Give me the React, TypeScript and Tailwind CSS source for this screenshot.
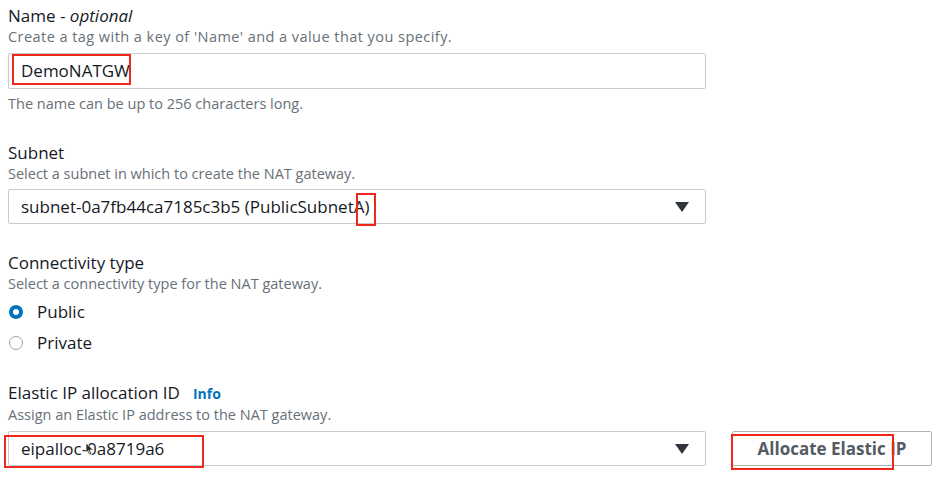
import React from "react";

const Caret = () => (
  <svg width="14" height="10" viewBox="0 0 14 10" className="shrink-0">
    <path d="M0 0 H14 L7 10 Z" fill="#2f343b" />
  </svg>
);

const Label = ({ children }: { children: React.ReactNode }) => (
  <div className="text-[17px] leading-[22px] text-[#16191f]">{children}</div>
);

const Desc = ({ children, className = "" }: { children: React.ReactNode; className?: string }) => (
  <div className={`text-[14.5px] leading-[20px] text-[#687078] ${className}`}>{children}</div>
);

const Radio = ({ checked, label }: { checked?: boolean; label: string }) => (
  <div className="flex h-[31px] items-center">
    {checked ? (
      <span className="ml-[1px] h-[14px] w-[14px] rounded-full border-[4px] border-[#0073bb] bg-white" />
    ) : (
      <span className="ml-[1px] h-[14px] w-[14px] rounded-full border border-[#9aa5a6] bg-white" />
    )}
    <span className="ml-[14px] text-[17px] text-[#16191f]">{label}</span>
  </div>
);

const RedBox = ({ className }: { className: string }) => (
  <div className={`pointer-events-none absolute border-2 border-[#f2271c] ${className}`} />
);

export default function App() {
  return (
    <div
      className="relative h-[478px] w-[936px] overflow-hidden bg-white pl-2 pt-[5px]"
      style={{ fontFamily: '"Open Sans", "Noto Sans", sans-serif' }}
    >
      {/* Name */}
      <Label>
        Name - <i>optional</i>
      </Label>
      <Desc className="tracking-[0.45px]">Create a tag with a key of 'Name' and a value that you specify.</Desc>
      <div className="mt-[6px] flex h-[36px] w-[698px] items-center rounded-[2px] border border-[#c6cccd] pl-[12px] text-[17px] text-[#16191f]">
        DemoNATGW
      </div>
      <Desc className="mt-[5px]">The name can be up to 256 characters long.</Desc>

      {/* Subnet */}
      <div className="mt-[28px]">
        <Label>Subnet</Label>
        <Desc>Select a subnet in which to create the NAT gateway.</Desc>
      </div>
      <div className="mt-[5px] flex h-[35px] w-[698px] items-center justify-between rounded-[2px] border border-[#c6cccd] pl-[12px] pr-[16px] text-[17px] text-[#16191f]">
        <span>subnet-0a7fb44ca7185c3b5 (PublicSubnetA)</span>
        <Caret />
      </div>

      {/* Connectivity */}
      <div className="mt-[28px]">
        <Label>Connectivity type</Label>
        <Desc>Select a connectivity type for the NAT gateway.</Desc>
      </div>
      <div className="mt-[2px]">
        <Radio checked label="Public" />
        <Radio label="Private" />
      </div>

      {/* Elastic IP */}
      <div className="mt-[24px]">
        <Label>
          Elastic IP allocation ID
          <span className="ml-[13px] text-[14px] font-bold text-[#0073bb]">Info</span>
        </Label>
        <Desc>Assign an Elastic IP address to the NAT gateway.</Desc>
      </div>
      <div className="mt-[6px] flex items-center">
        <div className="relative flex h-[35px] w-[698px] items-center justify-between rounded-[2px] border border-[#c6cccd] pl-[12px] pr-[16px] text-[17px] text-[#16191f]">
          <span>eipalloc-0a8719a6</span>
          <Caret />
          <svg className="absolute left-[76px] top-[10px]" width="10" height="14" viewBox="0 0 10 14">
            <path d="M1 1 L1 11 L3.5 8.5 L5.5 13 L7 12.3 L5 8 L8.5 8 Z" fill="#2b2b2b" stroke="#f4f4f4" strokeWidth="0.8" />
          </svg>
        </div>
        <button className="ml-[26px] h-[35px] w-[200px] rounded-[2px] border border-[#aab4b5] bg-white text-[17px] font-bold text-[#545b64]">
          Allocate Elastic IP
        </button>
      </div>

      {/* annotations */}
      <RedBox className="left-[12px] top-[54px] h-[31px] w-[119px]" />
      <RedBox className="left-[356px] top-[193px] h-[33px] w-[20px]" />
      <RedBox className="left-[4px] top-[435px] h-[33px] w-[200px]" />
      <RedBox className="left-[731px] top-[434px] h-[36px] w-[163px]" />
    </div>
  );
}
